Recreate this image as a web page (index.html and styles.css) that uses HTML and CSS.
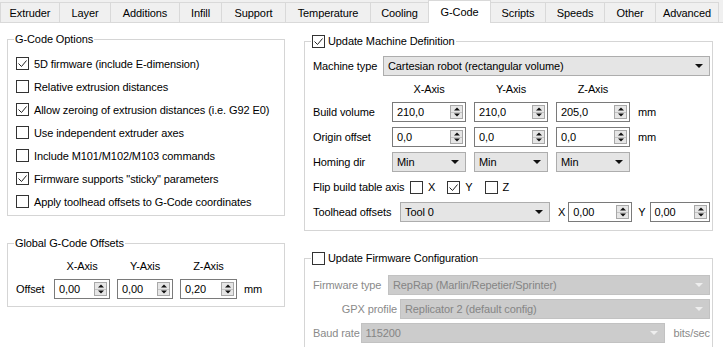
FILE: index.html
```html
<!DOCTYPE html>
<html lang="en">
<head>
    <meta charset="UTF-8">
    <meta name="viewport" content="width=device-width, initial-scale=1.0">
    <title>Printer Settings - G-Code</title>
    <link rel="stylesheet" href="styles.css">
</head>
<body>
    <!-- Tab Bar -->
    <div class="tabs">
        <div class="tab">Extruder</div>
        <div class="tab">Layer</div>
        <div class="tab">Additions</div>
        <div class="tab">Infill</div>
        <div class="tab">Support</div>
        <div class="tab">Temperature</div>
        <div class="tab">Cooling</div>
        <div class="tab active">G-Code</div>
        <div class="tab">Scripts</div>
        <div class="tab">Speeds</div>
        <div class="tab">Other</div>
        <div class="tab">Advanced</div>
    </div>

    <div class="pane">
        <!-- Left Column -->
        <div class="col-left">
            <fieldset class="group options">
                <legend>G-Code Options</legend>
                <label class="check-row"><span class="box"><svg viewBox="0 0 11 11" width="11" height="11"><path d="M1.5 5.5 L4.5 8.5 L9.5 2.5" fill="none" stroke="#222" stroke-width="1"/></svg></span>5D firmware (include E-dimension)</label>
                <label class="check-row"><span class="box"></span>Relative extrusion distances</label>
                <label class="check-row"><span class="box"><svg viewBox="0 0 11 11" width="11" height="11"><path d="M1.5 5.5 L4.5 8.5 L9.5 2.5" fill="none" stroke="#222" stroke-width="1"/></svg></span>Allow zeroing of extrusion distances (i.e. G92 E0)</label>
                <label class="check-row"><span class="box"></span>Use independent extruder axes</label>
                <label class="check-row"><span class="box"></span>Include M101/M102/M103 commands</label>
                <label class="check-row"><span class="box"><svg viewBox="0 0 11 11" width="11" height="11"><path d="M1.5 5.5 L4.5 8.5 L9.5 2.5" fill="none" stroke="#222" stroke-width="1"/></svg></span>Firmware supports "sticky" parameters</label>
                <label class="check-row"><span class="box"></span>Apply toolhead offsets to G-Code coordinates</label>
            </fieldset>

            <fieldset class="group offsets">
                <legend>Global G-Code Offsets</legend>
                <div class="offset-grid">
                    <span></span>
                    <span class="axis">X-Axis</span>
                    <span class="axis">Y-Axis</span>
                    <span class="axis">Z-Axis</span>
                    <span></span>

                    <span>Offset</span>
                    <div class="spin"><span>0,00</span><span class="spin-btn"><i class="up"></i><i class="down"></i></span></div>
                    <div class="spin"><span>0,00</span><span class="spin-btn"><i class="up"></i><i class="down"></i></span></div>
                    <div class="spin"><span>0,20</span><span class="spin-btn"><i class="up"></i><i class="down"></i></span></div>
                    <span class="unit">mm</span>
                </div>
            </fieldset>
        </div>

        <!-- Right Column -->
        <div class="col-right">
            <fieldset class="group machine">
                <legend><span class="legend-check"><span class="box"><svg viewBox="0 0 11 11" width="11" height="11"><path d="M1.5 5.5 L4.5 8.5 L9.5 2.5" fill="none" stroke="#222" stroke-width="1"/></svg></span>Update Machine Definition</span></legend>
                <div class="form-body">
                    <div class="row">
                        <span class="lbl-machine">Machine type</span>
                        <div class="combo grow"><span>Cartesian robot (rectangular volume)</span><i class="caret"></i></div>
                    </div>

                    <div class="axis-row head">
                        <span></span>
                        <span class="axis">X-Axis</span>
                        <span class="axis">Y-Axis</span>
                        <span class="axis">Z-Axis</span>
                    </div>

                    <div class="axis-row">
                        <span>Build volume</span>
                        <div class="spin"><span>210,0</span><span class="spin-btn"><i class="up"></i><i class="down"></i></span></div>
                        <div class="spin"><span>210,0</span><span class="spin-btn"><i class="up"></i><i class="down"></i></span></div>
                        <div class="spin"><span>205,0</span><span class="spin-btn"><i class="up"></i><i class="down"></i></span></div>
                        <span class="unit">mm</span>
                    </div>

                    <div class="axis-row">
                        <span>Origin offset</span>
                        <div class="spin"><span>0,0</span><span class="spin-btn"><i class="up"></i><i class="down"></i></span></div>
                        <div class="spin"><span>0,0</span><span class="spin-btn"><i class="up"></i><i class="down"></i></span></div>
                        <div class="spin"><span>0,0</span><span class="spin-btn"><i class="up"></i><i class="down"></i></span></div>
                        <span class="unit">mm</span>
                    </div>

                    <div class="axis-row">
                        <span>Homing dir</span>
                        <div class="combo"><span>Min</span><i class="caret"></i></div>
                        <div class="combo"><span>Min</span><i class="caret"></i></div>
                        <div class="combo"><span>Min</span><i class="caret"></i></div>
                    </div>

                    <div class="row">
                        <span class="lbl-flip">Flip build table axis</span>
                        <label class="flip-item"><span class="box"></span>X</label>
                        <label class="flip-item"><span class="box"><svg viewBox="0 0 11 11" width="11" height="11"><path d="M1.5 5.5 L4.5 8.5 L9.5 2.5" fill="none" stroke="#222" stroke-width="1"/></svg></span>Y</label>
                        <label class="flip-item"><span class="box"></span>Z</label>
                    </div>

                    <div class="row">
                        <span class="lbl-tool">Toolhead offsets</span>
                        <div class="combo tool"><span>Tool 0</span><i class="caret"></i></div>
                        <span class="coord-x">X</span>
                        <div class="spin tool-x"><span>0,00</span><span class="spin-btn"><i class="up"></i><i class="down"></i></span></div>
                        <span class="coord-y">Y</span>
                        <div class="spin grow"><span>0,00</span><span class="spin-btn"><i class="up"></i><i class="down"></i></span></div>
                    </div>
                </div>
            </fieldset>

            <fieldset class="group firmware">
                <legend><span class="legend-check"><span class="box"></span>Update Firmware Configuration</span></legend>
                <div class="form-body disabled">
                    <div class="row">
                        <span class="lbl-fw">Firmware type</span>
                        <div class="combo grow"><span>RepRap (Marlin/Repetier/Sprinter)</span><i class="caret"></i></div>
                    </div>
                    <div class="row">
                        <span class="lbl-gpx">GPX profile</span>
                        <div class="combo grow"><span>Replicator 2 (default config)</span><i class="caret"></i></div>
                    </div>
                    <div class="row">
                        <span class="lbl-baud">Baud rate</span>
                        <div class="combo baud"><span>115200</span><i class="caret"></i></div>
                        <span class="bits">bits/sec</span>
                    </div>
                </div>
            </fieldset>
        </div>
    </div>
</body>
</html>
```

FILE: styles.css
```css
/* General Reset */
* {
    margin: 0;
    padding: 0;
    box-sizing: border-box;
}

body {
    font-family: 'Liberation Sans', Arial, sans-serif;
    font-size: 11px;
    letter-spacing: -0.1px;
    line-height: 16px;
    white-space: nowrap;
    color: #000;
    background-color: #fff;
    width: 723px;
    height: 347px;
    overflow: hidden;
}

/* Tab Bar */
.tabs {
    display: flex;
    align-items: flex-end;
    height: 23px;
    background-color: #f0f0f0;
    border-bottom: 1px solid #d9d9d9;
}

.tab {
    display: flex;
    align-items: center;
    justify-content: center;
    height: 20px;
    padding-top: 1px;
    background-color: #f0f0f0;
    border-top: 1px solid #d9d9d9;
    border-right: 1px solid #d9d9d9;
}

.tab:first-child { border-left: 1px solid #d9d9d9; }

/* tab widths, left to right */
.tab:nth-child(1) { width: 60px; }
.tab:nth-child(2) { width: 51px; }
.tab:nth-child(3) { width: 69px; }
.tab:nth-child(4) { width: 42px; }
.tab:nth-child(5) { width: 64px; }
.tab:nth-child(6) { width: 85px; }
.tab:nth-child(7) { width: 58px; }
.tab:nth-child(8) { width: 63px; }
.tab:nth-child(9) { width: 55px; }
.tab:nth-child(10) { width: 59px; }
.tab:nth-child(11) { width: 51px; }
.tab:nth-child(12) { width: 63px; }

.tab.active {
    height: 23px;
    margin-bottom: -1px;
    margin-left: -1px;
    padding-top: 0;
    background-color: #fff;
    border-left: 1px solid #d9d9d9;
    position: relative;
    z-index: 1;
}

/* Page content */
.pane {
    display: flex;
    gap: 19px;
    padding: 8px 0 0 7px;
}

.col-left {
    width: 278px;
}

.col-right {
    width: 409px;
    padding-top: 2px;
}

/* Group boxes */
.group {
    min-width: 0;
    border: 1px solid #d5d5d5;
    padding: 0 6px;
}

.group legend {
    padding: 0 1px;
    line-height: 16px;
}

.legend-check {
    display: flex;
    align-items: center;
    gap: 3px;
}

.options {
    padding-top: 5px;
    padding-bottom: 2px;
}

.offsets {
    margin-top: 19px;
    padding-top: 7px;
    padding-bottom: 7px;
}

.machine {
    padding: 7px 2px 8px 6px;
}

.firmware {
    margin-top: 19px;
    padding: 9px 2px 8px 6px;
}

/* Checkboxes */
.box {
    display: inline-flex;
    align-items: center;
    justify-content: center;
    flex-shrink: 0;
    width: 13px;
    height: 13px;
    border: 1px solid #333;
    background-color: #fff;
}

.check-row {
    display: flex;
    align-items: center;
    gap: 5px;
    height: 23px;
    padding-left: 2px;
}

/* Spin boxes */
.spin {
    display: flex;
    align-items: center;
    justify-content: space-between;
    height: 20px;
    padding: 0 2px 0 4px;
    border: 1px solid #7a7a7a;
    background-color: #fff;
}

.spin-btn {
    display: flex;
    flex-direction: column;
    width: 13px;
    height: 14px;
    border: 1px solid #a8a8a8;
    background-color: #e6e6e6;
}

.spin-btn i {
    flex: 1;
    position: relative;
}

.spin-btn i::after {
    content: "";
    position: absolute;
    left: 50%;
    top: 50%;
    transform: translate(-50%, -50%);
    border-left: 3px solid transparent;
    border-right: 3px solid transparent;
}

.spin-btn .up::after { border-bottom: 3px solid #111; }
.spin-btn .down { border-top: 1px solid #c4c4c4; }
.spin-btn .down::after { border-top: 3px solid #111; }

/* Combo boxes */
.combo {
    display: flex;
    align-items: center;
    justify-content: space-between;
    height: 20px;
    padding: 0 6px 0 4px;
    background-color: #e5e5e5;
    border: 1px solid #adadad;
}

.caret {
    border-left: 4px solid transparent;
    border-right: 4px solid transparent;
    border-top: 4px solid #111;
}

.grow { flex: 1; }

/* Global offsets grid */
.offset-grid {
    display: grid;
    grid-template-columns: 31px 56px 56px 57px auto;
    grid-template-rows: 16px 20px;
    column-gap: 7px;
    row-gap: 5px;
    align-items: center;
    padding-left: 2px;
}

.axis {
    text-align: center;
}

/* Machine definition form */
.form-body {
    display: flex;
    flex-direction: column;
    gap: 5px;
    padding-left: 2px;
}

.row {
    display: flex;
    align-items: center;
    height: 20px;
}

.axis-row {
    display: grid;
    grid-template-columns: 71px 74px 74px 74px auto;
    column-gap: 8px;
    align-items: center;
    height: 20px;
}

.axis-row.head { height: 16px; }

.lbl-machine { width: 70px; }
.lbl-flip { width: 97px; }
.lbl-tool { width: 87px; }

.flip-item {
    display: flex;
    align-items: center;
    gap: 5px;
    margin-right: 12px;
}

.combo.tool { width: 150px; }
.coord-x { margin: 0 3px 0 8px; }
.spin.tool-x { width: 64px; }
.coord-y { margin: 0 4px 0 6px; }

/* Firmware configuration (disabled) */
.firmware .form-body { gap: 4px; }

.disabled { color: #8a8a8a; }

.disabled .combo {
    background-color: #cccccc;
    border-color: #c2c2c2;
    color: #858585;
}

.disabled .caret { border-top-color: #eeeeee; }

.lbl-fw { width: 75px; }
.lbl-gpx { width: 87px; text-align: right; padding-right: 3px; }
.lbl-baud { width: 48px; }
.combo.baud { width: 307px; }
.bits { margin-left: 9px; }
```
